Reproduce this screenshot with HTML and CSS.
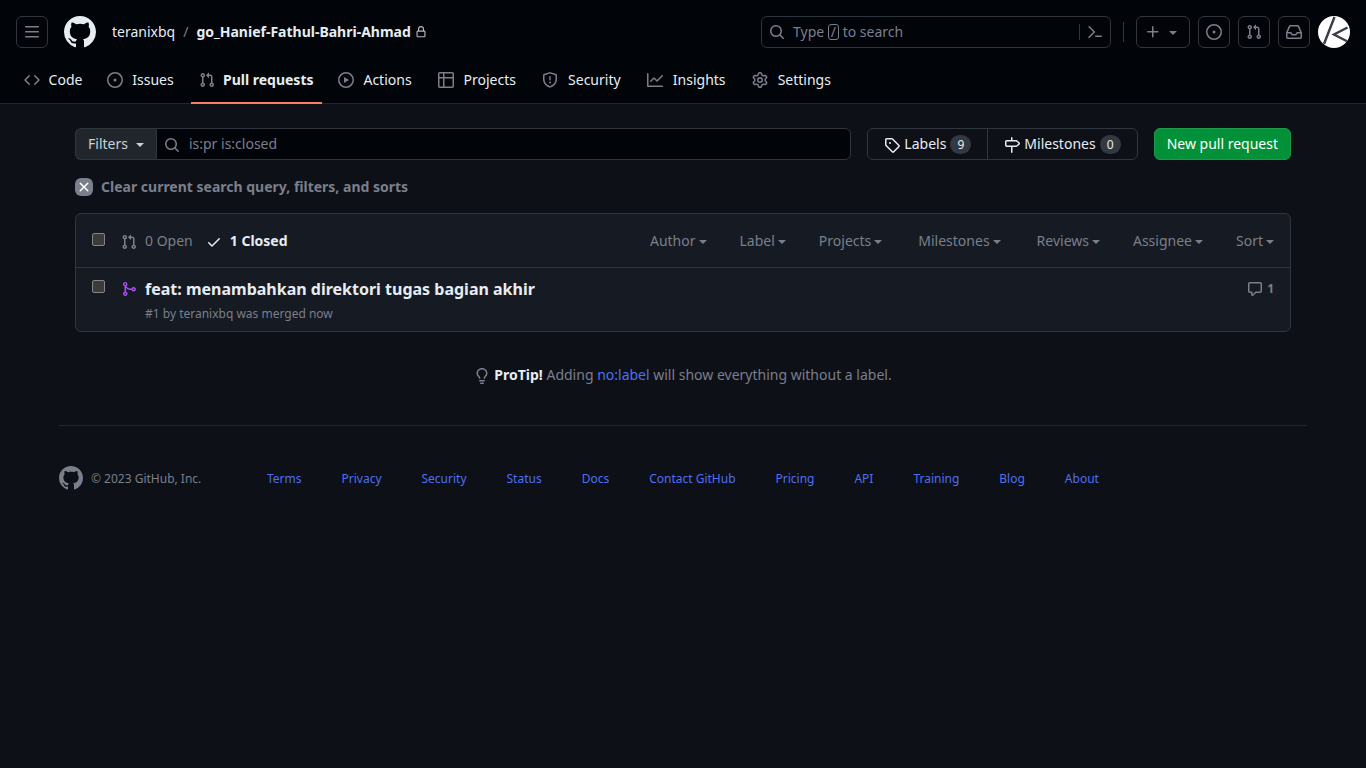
FILE: index.html
```html
<!DOCTYPE html>
<html lang="en">
<head>
<meta charset="utf-8">
<meta name="viewport" content="width=device-width, initial-scale=1">
<title>Pull requests · teranixbq/go_Hanief-Fathul-Bahri-Ahmad</title>
<link rel="stylesheet" href="styles.css">
</head>
<body>
<svg class="sprite" aria-hidden="true">
  <symbol id="i-menu" viewBox="0 0 16 16"><path d="M1 2.75A.75.75 0 0 1 1.75 2h12.5a.75.75 0 0 1 0 1.5H1.75A.75.75 0 0 1 1 2.75Zm0 5A.75.75 0 0 1 1.75 7h12.5a.75.75 0 0 1 0 1.5H1.75A.75.75 0 0 1 1 7.75ZM1.75 12h12.5a.75.75 0 0 1 0 1.5H1.75a.75.75 0 0 1 0-1.5Z"/></symbol>
  <symbol id="i-mark" viewBox="0 0 16 16"><path d="M8 0c4.42 0 8 3.58 8 8a8.013 8.013 0 0 1-5.45 7.59c-.4.08-.55-.17-.55-.38 0-.27.01-1.13.01-2.2 0-.75-.25-1.23-.54-1.48 1.78-.2 3.65-.88 3.65-3.95 0-.88-.31-1.59-.82-2.15.08-.2.36-1.02-.08-2.12 0 0-.67-.22-2.2.82-.64-.18-1.32-.27-2-.27-.68 0-1.36.09-2 .27-1.53-1.03-2.2-.82-2.2-.82-.44 1.1-.16 1.92-.08 2.12-.51.56-.82 1.28-.82 2.15 0 3.06 1.86 3.75 3.64 3.95-.23.2-.44.55-.51 1.07-.46.21-1.61.55-2.33-.66-.15-.24-.6-.83-1.23-.82-.67.01-.27.38.01.53.34.19.73.9.82 1.13.16.45.68 1.31 2.69.94 0 .67.01 1.3.01 1.49 0 .21-.15.45-.55.38A7.995 7.995 0 0 1 0 8c0-4.42 3.58-8 8-8Z"/></symbol>
  <symbol id="i-lock" viewBox="0 0 16 16"><path d="M4 4a4 4 0 0 1 8 0v2h.25c.966 0 1.75.784 1.75 1.75v5.5A1.75 1.75 0 0 1 12.25 15h-8.5A1.75 1.75 0 0 1 2 13.25v-5.5C2 6.784 2.784 6 3.75 6H4Zm8.25 3.5h-8.5a.25.25 0 0 0-.25.25v5.5c0 .138.112.25.25.25h8.5a.25.25 0 0 0 .25-.25v-5.5a.25.25 0 0 0-.25-.25ZM10.5 6V4a2.5 2.5 0 1 0-5 0v2Z"/></symbol>
  <symbol id="i-search" viewBox="0 0 16 16"><path d="M10.68 11.74a6 6 0 0 1-7.922-8.982 6 6 0 0 1 8.982 7.922l3.04 3.04a.749.749 0 0 1-.326 1.275.749.749 0 0 1-.734-.215ZM11.5 7a4.499 4.499 0 1 0-8.997 0A4.499 4.499 0 0 0 11.5 7Z"/></symbol>
  <symbol id="i-cmd" viewBox="0 0 16 16"><path d="m6.354 8.04-4.773 4.773a.75.75 0 1 0 1.061 1.06L7.945 8.57a.75.75 0 0 0 0-1.06L2.642 2.206a.75.75 0 0 0-1.06 1.061L6.353 8.04ZM8.75 11.5a.75.75 0 0 0 0 1.5h5.5a.75.75 0 0 0 0-1.5h-5.5Z"/></symbol>
  <symbol id="i-plus" viewBox="0 0 16 16"><path d="M7.75 2a.75.75 0 0 1 .75.75V7h4.25a.75.75 0 0 1 0 1.5H8.5v4.25a.75.75 0 0 1-1.5 0V8.5H2.75a.75.75 0 0 1 0-1.5H7V2.75A.75.75 0 0 1 7.75 2Z"/></symbol>
  <symbol id="i-tri" viewBox="0 0 16 16"><path d="m4.427 7.427 3.396 3.396a.25.25 0 0 0 .354 0l3.396-3.396A.25.25 0 0 0 11.396 7H4.604a.25.25 0 0 0-.177.427Z"/></symbol>
  <symbol id="i-issue" viewBox="0 0 16 16"><path d="M8 9.5a1.5 1.5 0 1 0 0-3 1.5 1.5 0 0 0 0 3Z"/><path d="M8 0a8 8 0 1 1 0 16A8 8 0 0 1 8 0ZM1.5 8a6.5 6.5 0 1 0 13 0 6.5 6.5 0 0 0-13 0Z"/></symbol>
  <symbol id="i-pr" viewBox="0 0 16 16"><path d="M1.5 3.25a2.25 2.25 0 1 1 3 2.122v5.256a2.251 2.251 0 1 1-1.5 0V5.372A2.25 2.25 0 0 1 1.5 3.25Zm5.677-.177L9.573.677A.25.25 0 0 1 10 .854V2.5h1A2.5 2.5 0 0 1 13.5 5v5.628a2.251 2.251 0 1 1-1.5 0V5a1 1 0 0 0-1-1h-1v1.646a.25.25 0 0 1-.427.177L7.177 3.427a.25.25 0 0 1 0-.354ZM3.75 2.5a.75.75 0 1 0 0 1.5.75.75 0 0 0 0-1.5Zm0 9.5a.75.75 0 1 0 0 1.5.75.75 0 0 0 0-1.5Zm8.250.75a.75.75 0 1 0 1.500 0 .75.75 0 0 0-1.500 0Z"/></symbol>
  <symbol id="i-inbox" viewBox="0 0 16 16"><path d="M2.8 2.06A1.75 1.75 0 0 1 4.41 1h7.18c.7 0 1.333.417 1.61 1.06l2.74 6.395c.04.093.06.194.06.295v4.5A1.75 1.75 0 0 1 14.25 15H1.75A1.75 1.75 0 0 1 0 13.25v-4.5c0-.101.02-.202.06-.295Zm1.61.44a.25.25 0 0 0-.23.152L1.887 8H4.75a.75.75 0 0 1 .6.3L6.625 10h2.75l1.275-1.7a.75.75 0 0 1 .6-.3h2.863L11.82 2.652a.25.25 0 0 0-.23-.152Zm10.09 7h-2.875l-1.275 1.7a.75.75 0 0 1-.6.3h-3.5a.75.75 0 0 1-.6-.3L4.375 9.5H1.5v3.75c0 .138.112.25.25.25h12.5a.25.25 0 0 0 .25-.25Z"/></symbol>
  <symbol id="i-code" viewBox="0 0 16 16"><path d="m11.28 3.22 4.25 4.25a.75.75 0 0 1 0 1.06l-4.25 4.25a.749.749 0 0 1-1.275-.326.749.749 0 0 1 .215-.734L13.94 8l-3.72-3.72a.749.749 0 0 1 .326-1.275.749.749 0 0 1 .734.215Zm-6.56 0a.751.751 0 0 1 1.042.018.751.751 0 0 1 .018 1.042L2.06 8l3.72 3.72a.749.749 0 0 1-.326 1.275.749.749 0 0 1-.734-.215L.47 8.53a.75.75 0 0 1 0-1.06Z"/></symbol>
  <symbol id="i-play" viewBox="0 0 16 16"><path d="M8 0a8 8 0 1 1 0 16A8 8 0 0 1 8 0ZM1.5 8a6.5 6.5 0 1 0 13 0 6.5 6.5 0 0 0-13 0Zm4.879-2.773 4.264 2.559a.25.25 0 0 1 0 .428l-4.264 2.559A.25.25 0 0 1 6 10.559V5.442a.25.25 0 0 1 .379-.215Z"/></symbol>
  <symbol id="i-table" viewBox="0 0 16 16"><path d="M0 1.75C0 .784.784 0 1.75 0h12.5C15.216 0 16 .784 16 1.75v12.5A1.75 1.75 0 0 1 14.25 16H1.75A1.75 1.75 0 0 1 0 14.25ZM6.5 6.5v8h7.75a.25.25 0 0 0 .25-.25V6.5Zm8-1.5V1.75a.25.25 0 0 0-.25-.25H6.5V5Zm-13 1.5v7.75c0 .138.112.25.25.25H5v-8ZM5 5V1.5H1.75a.25.25 0 0 0-.25.25V5Z"/></symbol>
  <symbol id="i-shield" viewBox="0 0 16 16"><path d="M7.467.133a1.748 1.748 0 0 1 1.066 0l5.25 1.68A1.75 1.75 0 0 1 15 3.48V7c0 1.566-.32 3.182-1.303 4.682-.983 1.498-2.585 2.813-5.032 3.855a1.697 1.697 0 0 1-1.33 0c-2.447-1.042-4.049-2.357-5.032-3.855C1.32 10.182 1 8.566 1 7V3.48a1.75 1.75 0 0 1 1.217-1.667Zm.61 1.429a.25.25 0 0 0-.153 0l-5.25 1.68a.25.25 0 0 0-.174.238V7c0 1.358.275 2.666 1.057 3.86.784 1.194 2.121 2.34 4.366 3.297a.196.196 0 0 0 .154 0c2.245-.956 3.582-2.104 4.366-3.298C13.225 9.666 13.5 8.36 13.5 7V3.48a.251.251 0 0 0-.174-.237l-5.25-1.68ZM8.75 4.75v3a.75.75 0 0 1-1.5 0v-3a.75.75 0 0 1 1.5 0ZM9 10.5a1 1 0 1 1-2 0 1 1 0 0 1 2 0Z"/></symbol>
  <symbol id="i-graph" viewBox="0 0 16 16"><path d="M1.5 1.75V13.5h13.75a.75.75 0 0 1 0 1.5H.75a.75.75 0 0 1-.75-.75V1.75a.75.75 0 0 1 1.5 0Zm14.28 2.53-5.25 5.25a.75.75 0 0 1-1.06 0L7 7.06 4.28 9.78a.751.751 0 0 1-1.042-.018.751.751 0 0 1-.018-1.042l3.25-3.25a.75.75 0 0 1 1.06 0L10 7.94l4.72-4.72a.751.751 0 0 1 1.042.018.751.751 0 0 1 .018 1.042Z"/></symbol>
  <symbol id="i-gear" viewBox="0 0 16 16"><path d="M8 0a8.2 8.2 0 0 1 .701.031C9.444.095 9.99.645 10.16 1.29l.288 1.107c.018.066.079.158.212.224.231.114.454.243.668.386.123.082.233.09.299.071l1.103-.303c.644-.176 1.392.021 1.82.63.27.385.506.792.704 1.218.315.675.111 1.422-.364 1.891l-.814.806c-.049.048-.098.147-.088.294.016.257.016.515 0 .772-.01.147.038.246.088.294l.814.806c.475.469.679 1.216.364 1.891a7.977 7.977 0 0 1-.704 1.217c-.428.61-1.176.807-1.82.63l-1.102-.302c-.067-.019-.177-.011-.3.071a5.909 5.909 0 0 1-.668.386c-.133.066-.194.158-.211.224l-.29 1.106c-.168.646-.715 1.196-1.458 1.26a8.006 8.006 0 0 1-1.402 0c-.743-.064-1.289-.614-1.458-1.26l-.289-1.106c-.018-.066-.079-.158-.212-.224a5.738 5.738 0 0 1-.668-.386c-.123-.082-.233-.09-.299-.071l-1.103.303c-.644.176-1.392-.021-1.82-.63a8.12 8.12 0 0 1-.704-1.218c-.315-.675-.111-1.422.363-1.891l.815-.806c.05-.048.098-.147.088-.294a6.214 6.214 0 0 1 0-.772c.01-.147-.038-.246-.088-.294l-.815-.806C.635 6.045.431 5.298.746 4.623a7.92 7.92 0 0 1 .704-1.217c.428-.61 1.176-.807 1.82-.63l1.102.302c.067.019.177.011.3-.071.214-.143.437-.272.668-.386.133-.066.194-.158.211-.224l.29-1.106C6.009.645 6.556.095 7.299.03 7.53.01 7.764 0 8 0Zm-.571 1.525c-.036.003-.108.036-.137.146l-.289 1.105c-.147.561-.549.967-.998 1.189-.173.086-.34.183-.5.29-.417.278-.97.423-1.529.27l-1.103-.303c-.109-.03-.175.016-.195.045-.22.312-.412.644-.573.99-.014.031-.021.11.059.19l.815.806c.411.406.562.957.53 1.456a4.709 4.709 0 0 0 0 .582c.032.499-.119 1.05-.53 1.456l-.815.806c-.081.08-.073.159-.059.19.162.346.353.677.573.989.02.03.085.076.195.046l1.102-.303c.56-.153 1.113-.008 1.53.27.161.107.328.204.501.29.447.222.85.629.997 1.189l.289 1.105c.029.109.101.143.137.146a6.6 6.6 0 0 0 1.142 0c.036-.003.108-.036.137-.146l.289-1.105c.147-.561.549-.967.998-1.189.173-.086.34-.183.5-.29.417-.278.97-.423 1.529-.27l1.103.303c.109.029.175-.016.195-.045.22-.313.411-.644.573-.99.014-.031.021-.11-.059-.19l-.815-.806c-.411-.406-.562-.957-.53-1.456a4.709 4.709 0 0 0 0-.582c-.032-.499.119-1.05.53-1.456l.815-.806c.081-.08.073-.159.059-.19a6.464 6.464 0 0 0-.573-.989c-.02-.03-.085-.076-.195-.046l-1.102.303c-.56.153-1.113.008-1.53-.27a4.44 4.44 0 0 0-.501-.29c-.447-.222-.85-.629-.997-1.189l-.289-1.105c-.029-.11-.101-.143-.137-.146a6.6 6.6 0 0 0-1.142 0ZM11 8a3 3 0 1 1-6 0 3 3 0 0 1 6 0ZM9.5 8a1.5 1.5 0 1 0-3.001.001A1.5 1.5 0 0 0 9.5 8Z"/></symbol>
  <symbol id="i-tag" viewBox="0 0 16 16"><path d="M1 7.775V2.75C1 1.784 1.784 1 2.75 1h5.025c.464 0 .91.184 1.238.513l6.25 6.25a1.75 1.75 0 0 1 0 2.474l-5.026 5.026a1.75 1.75 0 0 1-2.474 0l-6.25-6.25A1.752 1.752 0 0 1 1 7.775Zm1.5 0c0 .066.026.13.073.177l6.25 6.25a.25.25 0 0 0 .354 0l5.025-5.025a.25.25 0 0 0 0-.354l-6.25-6.25a.25.25 0 0 0-.177-.073H2.75a.25.25 0 0 0-.25.25ZM6 5a1 1 0 1 1 0 2 1 1 0 0 1 0-2Z"/></symbol>
  <symbol id="i-sign" viewBox="0 0 16 16"><path d="M7.75 0a.75.75 0 0 1 .75.75V3h3.634c.414 0 .814.147 1.13.414l2.07 1.75a1.75 1.75 0 0 1 0 2.672l-2.07 1.75a1.75 1.75 0 0 1-1.13.414H8.5v5.25a.75.75 0 0 1-1.5 0V10H2.75A1.75 1.75 0 0 1 1 8.25v-3.5C1 3.784 1.784 3 2.75 3H7V.75A.75.75 0 0 1 7.75 0Zm4.384 8.5a.25.25 0 0 0 .161-.06l2.07-1.75a.248.248 0 0 0 0-.38l-2.07-1.75a.25.25 0 0 0-.161-.06H2.75a.25.25 0 0 0-.25.25v3.5c0 .138.112.25.25.25h9.384Z"/></symbol>
  <symbol id="i-x" viewBox="0 0 16 16"><path d="M3.72 3.72a.75.75 0 0 1 1.06 0L8 6.94l3.22-3.22a.749.749 0 0 1 1.275.326.749.749 0 0 1-.215.734L9.06 8l3.22 3.22a.749.749 0 0 1-.326 1.275.749.749 0 0 1-.734-.215L8 9.06l-3.22 3.22a.751.751 0 0 1-1.042-.018.751.751 0 0 1-.018-1.042L6.94 8 3.72 4.78a.75.75 0 0 1 0-1.06Z"/></symbol>
  <symbol id="i-check" viewBox="0 0 16 16"><path d="M13.78 4.22a.75.75 0 0 1 0 1.06l-7.25 7.25a.75.75 0 0 1-1.06 0L2.22 9.28a.751.751 0 0 1 .018-1.042.751.751 0 0 1 1.042-.018L6 10.94l6.72-6.72a.75.75 0 0 1 1.06 0Z"/></symbol>
  <symbol id="i-merge" viewBox="0 0 16 16"><path d="M5.45 5.154A4.25 4.25 0 0 0 9.25 7.5h1.378a2.251 2.251 0 1 1 0 1.5H9.25A5.734 5.734 0 0 1 5 7.123v3.505a2.25 2.25 0 1 1-1.5 0V5.372a2.25 2.25 0 1 1 1.95-.218ZM4.25 13.5a.75.75 0 1 0 0-1.5.75.75 0 0 0 0 1.5Zm8.5-4.5a.75.75 0 1 0 0-1.5.75.75 0 0 0 0 1.5ZM5 3.25a.75.75 0 1 0 0 .005V3.25Z"/></symbol>
  <symbol id="i-comment" viewBox="0 0 16 16"><path d="M1 2.75C1 1.784 1.784 1 2.75 1h10.5c.966 0 1.75.784 1.75 1.75v7.5A1.75 1.75 0 0 1 13.25 12H9.06l-2.573 2.573A1.458 1.458 0 0 1 4 13.543V12H2.75A1.75 1.75 0 0 1 1 10.25Zm1.75-.25a.25.25 0 0 0-.25.25v7.5c0 .138.112.25.25.25h2a.75.75 0 0 1 .75.75v2.19l2.72-2.72a.749.749 0 0 1 .53-.22h4.5a.25.25 0 0 0 .25-.25v-7.5a.25.25 0 0 0-.25-.25Z"/></symbol>
  <symbol id="i-bulb" viewBox="0 0 16 16"><path d="M8 1.5c-2.363 0-4 1.69-4 3.75 0 .984.424 1.625.984 2.304l.214.253c.223.264.47.556.673.848.284.411.537.896.621 1.49a.75.75 0 0 1-1.484.211c-.04-.282-.163-.547-.37-.847a8.456 8.456 0 0 0-.542-.68c-.084-.1-.173-.205-.268-.32C3.201 7.75 2.5 6.766 2.5 5.25 2.5 2.31 4.863 0 8 0s5.5 2.31 5.5 5.25c0 1.516-.701 2.5-1.328 3.259-.095.115-.184.22-.268.319-.207.245-.383.453-.541.681-.208.3-.33.565-.37.847a.751.751 0 0 1-1.485-.212c.084-.593.337-1.078.621-1.489.203-.292.45-.584.673-.848.075-.088.147-.173.213-.253.561-.679.985-1.32.985-2.304 0-2.06-1.637-3.75-4-3.75ZM5.75 12h4.5a.75.75 0 0 1 0 1.5h-4.5a.75.75 0 0 1 0-1.5ZM6 15.25a.75.75 0 0 1 .75-.75h2.5a.75.75 0 0 1 0 1.5h-2.5a.75.75 0 0 1-.75-.75Z"/></symbol>
</svg>

<header class="site-header">
  <div class="topbar">
    <button class="icon-button" type="button" aria-label="Open menu"><svg class="icon"><use href="#i-menu"/></svg></button>
    <a class="home" href="#" aria-label="Homepage"><svg class="mark"><use href="#i-mark"/></svg></a>
    <nav class="crumbs" aria-label="Breadcrumb">
      <a href="#">teranixbq</a>
      <span class="slash">/</span>
      <a class="repo" href="#">go_Hanief-Fathul-Bahri-Ahmad</a>
      <svg class="lock"><use href="#i-lock"/></svg>
    </nav>
    <div class="search-bar">
      <button class="search-button" type="button"><svg class="icon"><use href="#i-search"/></svg><span>Type <kbd>/</kbd> to search</span></button>
      <button class="palette-button" type="button" aria-label="Command palette"><svg class="icon"><use href="#i-cmd"/></svg></button>
    </div>
    <div class="divider"></div>
    <div class="actions">
      <button class="icon-button create" type="button" aria-label="Create new"><svg class="icon"><use href="#i-plus"/></svg><svg class="icon"><use href="#i-tri"/></svg></button>
      <a class="icon-button" href="#" aria-label="Issues"><svg class="icon"><use href="#i-issue"/></svg></a>
      <a class="icon-button" href="#" aria-label="Pull requests"><svg class="icon"><use href="#i-pr"/></svg></a>
      <a class="icon-button" href="#" aria-label="Notifications"><svg class="icon"><use href="#i-inbox"/></svg></a>
      <button class="avatar" type="button" aria-label="Account"><svg viewBox="0 0 32 32"><path d="M16.500 1 6 28M29.500 11.500 16 18.500 29.500 25.500" fill="none" stroke="#3a3d46" stroke-width="2.400"/></svg></button>
    </div>
  </div>
  <nav class="tabs" aria-label="Repository">
    <a class="tab" href="#"><svg class="icon"><use href="#i-code"/></svg><span data-label="Code">Code</span></a>
    <a class="tab" href="#"><svg class="icon"><use href="#i-issue"/></svg><span data-label="Issues">Issues</span></a>
    <a class="tab current" href="#" aria-current="page"><svg class="icon"><use href="#i-pr"/></svg><span data-label="Pull requests">Pull requests</span></a>
    <a class="tab" href="#"><svg class="icon"><use href="#i-play"/></svg><span data-label="Actions">Actions</span></a>
    <a class="tab" href="#"><svg class="icon"><use href="#i-table"/></svg><span data-label="Projects">Projects</span></a>
    <a class="tab" href="#"><svg class="icon"><use href="#i-shield"/></svg><span data-label="Security">Security</span></a>
    <a class="tab" href="#"><svg class="icon"><use href="#i-graph"/></svg><span data-label="Insights">Insights</span></a>
    <a class="tab" href="#"><svg class="icon"><use href="#i-gear"/></svg><span data-label="Settings">Settings</span></a>
  </nav>
</header>

<main class="content">
  <div class="toolbar">
    <form class="query">
      <button class="filters" type="button">Filters <span class="caret"></span></button>
      <label class="query-field">
        <svg class="icon"><use href="#i-search"/></svg>
        <input type="text" value="is:pr is:closed" aria-label="Search all pull requests">
      </label>
    </form>
    <nav class="subnav" aria-label="Labels and milestones">
      <a href="#"><svg class="icon"><use href="#i-tag"/></svg>Labels <span class="counter">9</span></a>
      <a href="#"><svg class="icon"><use href="#i-sign"/></svg>Milestones <span class="counter">0</span></a>
    </nav>
    <a class="primary" href="#">New pull request</a>
  </div>

  <a class="clear" href="#"><span class="clear-icon"><svg class="icon"><use href="#i-x"/></svg></span>Clear current search query, filters, and sorts</a>

  <section class="box">
    <div class="box-header">
      <input class="check" type="checkbox" aria-label="Select all pull requests">
      <div class="states">
        <a href="#"><svg class="icon"><use href="#i-pr"/></svg>0 Open</a>
        <a class="selected" href="#"><svg class="icon"><use href="#i-check"/></svg>1 Closed</a>
      </div>
      <div class="menus">
        <button type="button">Author<span class="caret"></span></button>
        <button type="button">Label<span class="caret"></span></button>
        <button type="button">Projects<span class="caret"></span></button>
        <button class="wide" type="button">Milestones<span class="caret"></span></button>
        <button type="button">Reviews<span class="caret"></span></button>
        <button type="button">Assignee<span class="caret"></span></button>
        <button type="button">Sort<span class="caret"></span></button>
      </div>
    </div>
    <article class="row">
      <input class="check" type="checkbox" aria-label="Select feat: menambahkan direktori tugas bagian akhir">
      <svg class="icon merged"><use href="#i-merge"/></svg>
      <div class="row-body">
        <a class="row-title" href="#">feat: menambahkan direktori tugas bagian akhir</a>
        <div class="row-meta">#1 by <a href="#">teranixbq</a> was merged now</div>
      </div>
      <a class="comments" href="#" aria-label="1 comment"><svg class="icon"><use href="#i-comment"/></svg>1</a>
    </article>
  </section>

  <p class="protip"><svg class="icon"><use href="#i-bulb"/></svg><span><strong>ProTip!</strong> Adding <a href="#">no:label</a> will show everything without a label.</span></p>
</main>

<footer class="footer">
  <div class="footer-inner">
    <div class="copyright"><svg class="footer-mark"><use href="#i-mark"/></svg>© 2023 GitHub, Inc.</div>
    <nav class="footer-links" aria-label="Footer">
      <a href="#">Terms</a><a href="#">Privacy</a><a href="#">Security</a><a href="#">Status</a><a href="#">Docs</a><a href="#">Contact GitHub</a><a href="#">Pricing</a><a href="#">API</a><a href="#">Training</a><a href="#">Blog</a><a href="#">About</a>
    </nav>
  </div>
</footer>
</body>
</html>
```
FILE: styles.css
```css
:root {
  --canvas: #0d1017;
  --inset: #010409;
  --subtle: #161a22;
  --border: #30363d;
  --text: #e6edf3;
  --muted: #7a7f8c;
  --link: #4f6ff0;
}
* { box-sizing: border-box; }
body {
  margin: 0;
  background: var(--canvas);
  color: var(--text);
  font: 14px/21px "Noto Sans", sans-serif;
}
a { color: inherit; text-decoration: none; }
button, input { font: inherit; color: inherit; margin: 0; }
button { background: none; border: 0; padding: 0; cursor: pointer; }
.sprite { display: none; }
.icon { width: 16px; height: 16px; fill: currentColor; flex: none; display: block; }

.site-header { background: var(--inset); border-bottom: 1px solid #21262d; }
.topbar { display: flex; align-items: center; padding: 16px 16px 8px; line-height: 20px; }
.icon-button {
  display: flex; align-items: center; justify-content: center;
  width: 32px; height: 32px;
  border: 1px solid var(--border); border-radius: 6px;
  color: var(--muted);
}
.home { margin-left: 16px; }
.mark { display: block; width: 32px; height: 32px; fill: var(--text); }
.crumbs { display: flex; align-items: center; margin-left: 16px; flex: 1; white-space: nowrap; }
.slash { color: var(--muted); margin: 0 8px; }
.repo { font-weight: 700; }
.lock { width: 12px; height: 12px; margin-left: 4px; fill: #b4bac2; }
.search-bar {
  display: flex; align-items: center;
  width: 350px; height: 32px; padding: 0 7px;
  border: 1px solid var(--border); border-radius: 6px;
  color: var(--muted);
}
.search-button { display: flex; align-items: center; gap: 8px; flex: 1; text-align: left; line-height: 20px; }
kbd {
  display: inline-block; font: inherit; line-height: 14px;
  padding: 0 2px; border: 1px solid var(--muted); border-radius: 3px;
}
.palette-button { padding-left: 7px; border-left: 1px solid var(--border); }
.divider { width: 1px; height: 20px; margin: 0 12px; background: var(--border); }
.actions { display: flex; gap: 8px; }
.create { width: 54px; gap: 4px; }
.avatar { width: 32px; height: 32px; border-radius: 50%; background: #fff; overflow: hidden; }
.avatar svg { display: block; }

.tabs { display: flex; gap: 8px; padding: 0 16px; }
.tab {
  display: flex; align-items: center; gap: 8px;
  height: 48px; padding: 1px 8px 0; margin-bottom: -1px;
  border-bottom: 2px solid transparent;
}
.tab .icon { color: var(--muted); }
.tab span { text-align: center; }
.tab span::before {
  content: attr(data-label);
  display: block; height: 0; overflow: hidden; visibility: hidden;
  font-weight: 700;
}
.current { font-weight: 700; border-color: #f78166; }

.content { max-width: 1280px; margin: 0 auto; padding: 24px 32px 0; }
.toolbar { display: flex; gap: 16px; height: 32px; line-height: 20px; }
.query { display: flex; flex: 1; }
.filters {
  display: flex; align-items: center; gap: 8px; padding: 0 12px; line-height: 20px;
  background: #21262d; color: #c9d1d9;
  border: 1px solid var(--border); border-right: 0; border-radius: 6px 0 0 6px;
}
.filters .caret { margin-top: 2px; }
.query-field {
  display: flex; align-items: center; flex: 1; gap: 9px; padding-left: 7px;
  background: var(--inset); color: var(--muted);
  border: 1px solid var(--border); border-radius: 0 6px 6px 0;
}
.query-field .icon, .subnav .icon { margin-top: 2px; }
.query-field input { flex: 1; min-width: 0; height: 20px; padding: 0; border: 0; outline: 0; background: none; }
.caret {
  display: inline-block; flex: none;
  border: 4px solid transparent; border-top-color: currentColor; border-bottom: 0;
}
.subnav { display: flex; border: 1px solid var(--border); border-radius: 6px; }
.subnav a { display: flex; align-items: center; gap: 4px; padding: 0 16px; }
.subnav a + a { border-left: 1px solid var(--border); }
.counter {
  min-width: 21px; padding: 0 6px; text-align: center;
  font-size: 12px; line-height: 19px;
  background: #343941; border-radius: 10px;
}
.primary {
  padding: 5px 12px; border: 1px solid #1f9a4b; border-radius: 6px;
  background: #029138; color: #fff;
}
.clear {
  display: flex; align-items: center; gap: 8px; width: max-content;
  margin: 16px 0; color: var(--muted); font-weight: 700;
}
.clear-icon { padding: 1px; border-radius: 6px; background: var(--muted); color: #fff; }

.box { background: var(--subtle); border: 1px solid var(--border); border-radius: 6px; }
.box-header { display: flex; align-items: center; padding: 16px; border-bottom: 1px solid var(--border); color: var(--muted); }
.check {
  appearance: none; flex: none; width: 13px; height: 13px;
  background: #3b3b3b; border: 1px solid #858585; border-radius: 2px;
}
.box-header .check { align-self: flex-start; margin-top: 3px; }
.states { display: flex; gap: 13px; margin-left: 16px; }
.states a { display: flex; align-items: center; gap: 8px; }
.states .icon { margin-top: 2px; }
.selected { color: var(--text); font-weight: 700; }
.menus { display: flex; gap: 33px; margin-left: auto; }
.menus button { display: flex; align-items: center; gap: 3px; }
.menus .caret { margin-top: 2px; }
.menus .wide { margin: 0 3px; }
.row { display: flex; align-items: flex-start; padding: 8px 16px; }
.row .check { margin-top: 4px; }
.merged { margin: 5px 8px 0 16px; color: #a84df0; }
.row-body { flex: 1; padding-top: 1px; }
.row-title { font-size: 16px; line-height: 24px; font-weight: 700; }
.row-meta { margin-top: 4px; font-size: 12px; line-height: 18px; color: var(--muted); }
.comments { display: flex; align-items: center; gap: 4px; margin-top: 4px; font-size: 12px; line-height: 18px; font-weight: 700; color: var(--muted); }

.protip { display: flex; justify-content: center; gap: 4px; margin: 32px 0 0; color: var(--muted); }
.protip .icon { margin-top: 4px; }
.protip strong { font-weight: 700; color: var(--text); }
.protip a, .footer-links a { color: var(--link); }

.footer { max-width: 1280px; margin: 40px auto 0; padding: 0 16px; font-size: 12px; line-height: 19px; }
.footer-inner { display: grid; grid-template-columns: 2fr 8fr 2fr; align-items: center; padding: 40px 0; border-top: 1px solid #21262d; }
.copyright { display: flex; align-items: center; gap: 8px; color: var(--muted); }
.footer-mark { width: 24px; height: 24px; fill: var(--muted); }
.footer-links { display: flex; justify-content: space-between; white-space: nowrap; }
```
